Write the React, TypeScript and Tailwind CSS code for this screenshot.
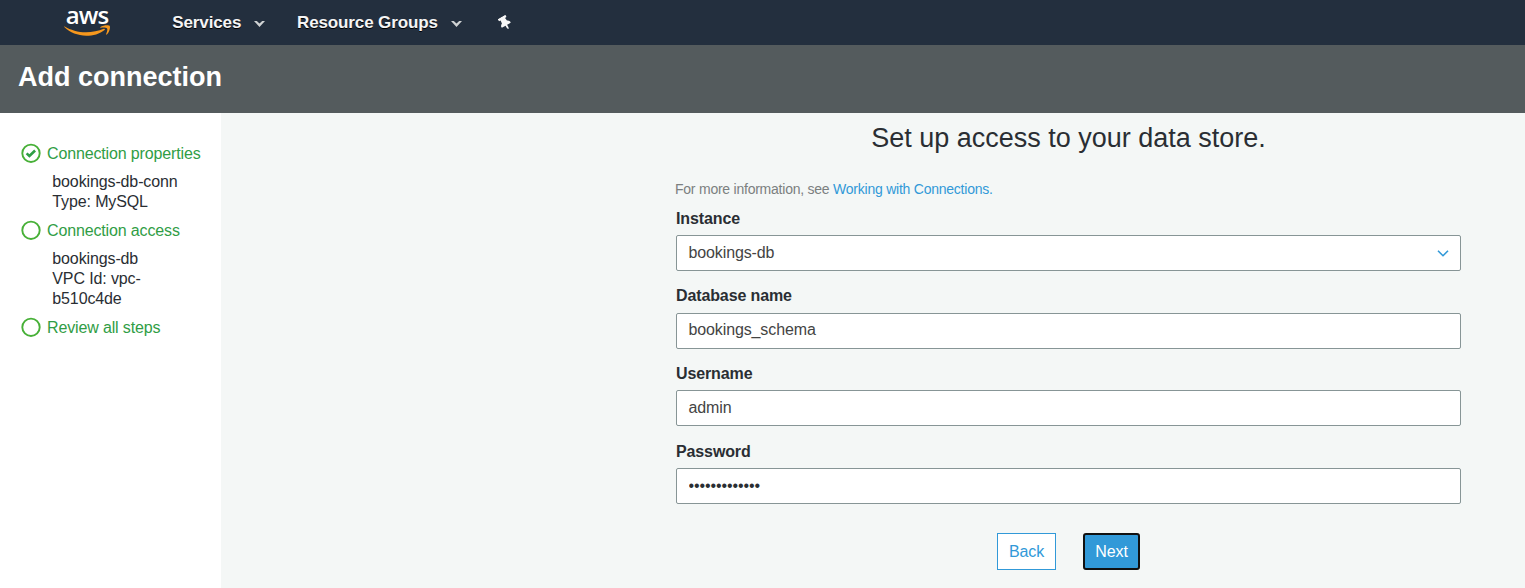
import type { ReactNode } from "react";
import { FaThumbtack } from "react-icons/fa";

function AwsLogo() {
  return (
    <div className="flex h-[45px] w-[46px] flex-col items-center">
      <span className="-mb-1 h-[29px] font-['Open_Sans',sans-serif] text-[24px] leading-[29px] font-semibold tracking-[-0.900px] text-white">aws</span>
      <svg className="h-[12px] w-[46px] shrink-0" viewBox="0 0 46 12" fill="#f7981d">
        <path d="M0.6 1.500C6.500 5 14 7.300 22 7.300c6.300 0 12.500-1.300 17.800-3.500.9-.4 1.600.5.8 1.100C35.800 8.800 29 10.800 22.300 10.800 13.700 10.800 6 7.500.3 2.100-.1 1.700.2 1.200.6 1.500z" />
        <path d="M36.500 2.100c2.300-1.900 8.300-2.400 9.200-1.200.9 1.300-.3 6.300-2.900 8.600-.4.300-.9.100-.7-.4.800-2 1.700-4.800 1-5.700-.6-.9-4-.9-6.200-.7-.6.100-.8-.3-.4-.6z" />
      </svg>
    </div>
  );
}

function Caret() {
  return (
    <svg className="mt-[3px] h-[6px] w-[11px]" viewBox="0 0 11 6" fill="#cfd2d3">
      <path d="M0 0h2.800l2.700 2.500L8.200 0H11L5.500 6z" />
    </svg>
  );
}

function Step({ title, done, children }: { title: string; done?: boolean; children?: ReactNode }) {
  return (
    <li>
      <div className="flex h-6 items-center gap-[6px]">
        <svg className="mb-0.5 h-5 w-5 shrink-0" viewBox="0 0 20 20" fill="none" stroke="#47b037">
          <circle cx="10" cy="10.300" r="8.700" strokeWidth="1.900" />
          {done && <path d="M5.600 10.400l2.800 2.600 5.700-5.500" stroke="#2f9e45" strokeWidth="2.600" />}
        </svg>
        <span className="text-base leading-6 tracking-[-0.140px] whitespace-nowrap text-[#309d45]">{title}</span>
      </div>
      {children && <div className="mt-[6px] mb-[7px] ml-[31.300px] w-[110px] text-base leading-5 tracking-[-0.120px] text-[#2a2e33]">{children}</div>}
    </li>
  );
}

function Field({ label, value, select, password }: { label: string; value: string; select?: boolean; password?: boolean }) {
  return (
    <label className="block">
      <span className="block h-[26px] pt-[0.600px] text-base leading-[18px] font-bold tracking-[-0.120px] text-[#2a2e33]">{label}</span>
      <span className="flex h-9 items-center rounded-[2px] border border-[#879596] bg-white px-[11.500px]">
        {password ? (
          <input
            type="password"
            readOnly
            defaultValue={value}
            className="mb-px w-[200px] bg-transparent text-base tracking-[-0.100px] text-[#2a2e33] outline-none"
          />
        ) : (
          <span className="flex-1 pb-px text-base leading-5 tracking-[-0.120px] text-[#444]">{value}</span>
        )}
        {select && (
          <svg className="mt-px h-[7px] w-[12px]" viewBox="0 0 12 7" fill="none" stroke="#3199d8" strokeWidth="1.600">
            <path d="M1 .7l5 5 5-5" />
          </svg>
        )}
      </span>
    </label>
  );
}

export default function App() {
  return (
    <div className="flex h-[588px] w-[1525px] flex-col overflow-hidden bg-[#f4f7f6] font-['Liberation_Sans',Arial,sans-serif]">
      <header className="flex h-[45px] shrink-0 items-center bg-[#232f3e] pl-[64px] text-[17px] font-bold text-[#f5f5f5]">
        <AwsLogo />
        <nav className="flex items-center tracking-[-0.120px]">
          <div className="ml-[62.300px] flex w-[124.700px] items-center gap-[13px] [text-shadow:0_1px_0_#000]">
            <span>Services</span>
            <Caret />
          </div>
          <div className="flex w-[201px] items-center gap-[13px] [text-shadow:0_1px_0_#000]">
            <span>Resource Groups</span>
            <Caret />
          </div>
          <FaThumbtack className="h-[14px] w-[14px] -rotate-[30deg] text-[#f7f7f7]" />
        </nav>
      </header>

      <div className="flex h-[68px] shrink-0 items-center bg-[#545b5d] pb-[4px] pl-[18px]">
        <h1 className="text-[27px] leading-9 font-bold text-white">Add connection</h1>
      </div>

      <div className="flex min-h-0 flex-1">
        <aside className="w-[221px] shrink-0 bg-white pt-[29px] pl-[21px]">
          <ol>
            <Step title="Connection properties" done>
              <div className="whitespace-nowrap">bookings-db-conn</div>
              <div>Type: MySQL</div>
            </Step>
            <Step title="Connection access">
              <div>bookings-db</div>
              <div>VPC Id: vpc-b510c4de</div>
            </Step>
            <Step title="Review all steps" />
          </ol>
        </aside>

        <main className="ml-[455px] w-[785px] pt-[7px]">
          <h2 className="text-center text-[27px] leading-9 text-[#2a2e33]">Set up access to your data store.</h2>
          <p className="mt-[23px] ml-[-1px] text-sm leading-5 tracking-[-0.235px] text-[#7b7f80]">
            For more information, see <a className="text-[#3199d8]">Working with Connections.</a>
          </p>
          <form className="mt-[10px] flex flex-col gap-[15.700px]">
            <Field label="Instance" value="bookings-db" select />
            <Field label="Database name" value="bookings_schema" />
            <Field label="Username" value="admin" />
            <Field label="Password" value="bookingsadmin" password />
          </form>
          <div className="mt-[29px] flex justify-center gap-[27px] text-base tracking-[-0.100px]">
            <button type="button" className="h-[37px] w-[59px] border border-[#3199d8] bg-white text-[#3199d8]">Back</button>
            <button type="button" className="h-[37px] w-[57px] rounded-[3px] border-2 border-[#101010] bg-[#3199d8] text-white">Next</button>
          </div>
        </main>
      </div>
    </div>
  );
}
